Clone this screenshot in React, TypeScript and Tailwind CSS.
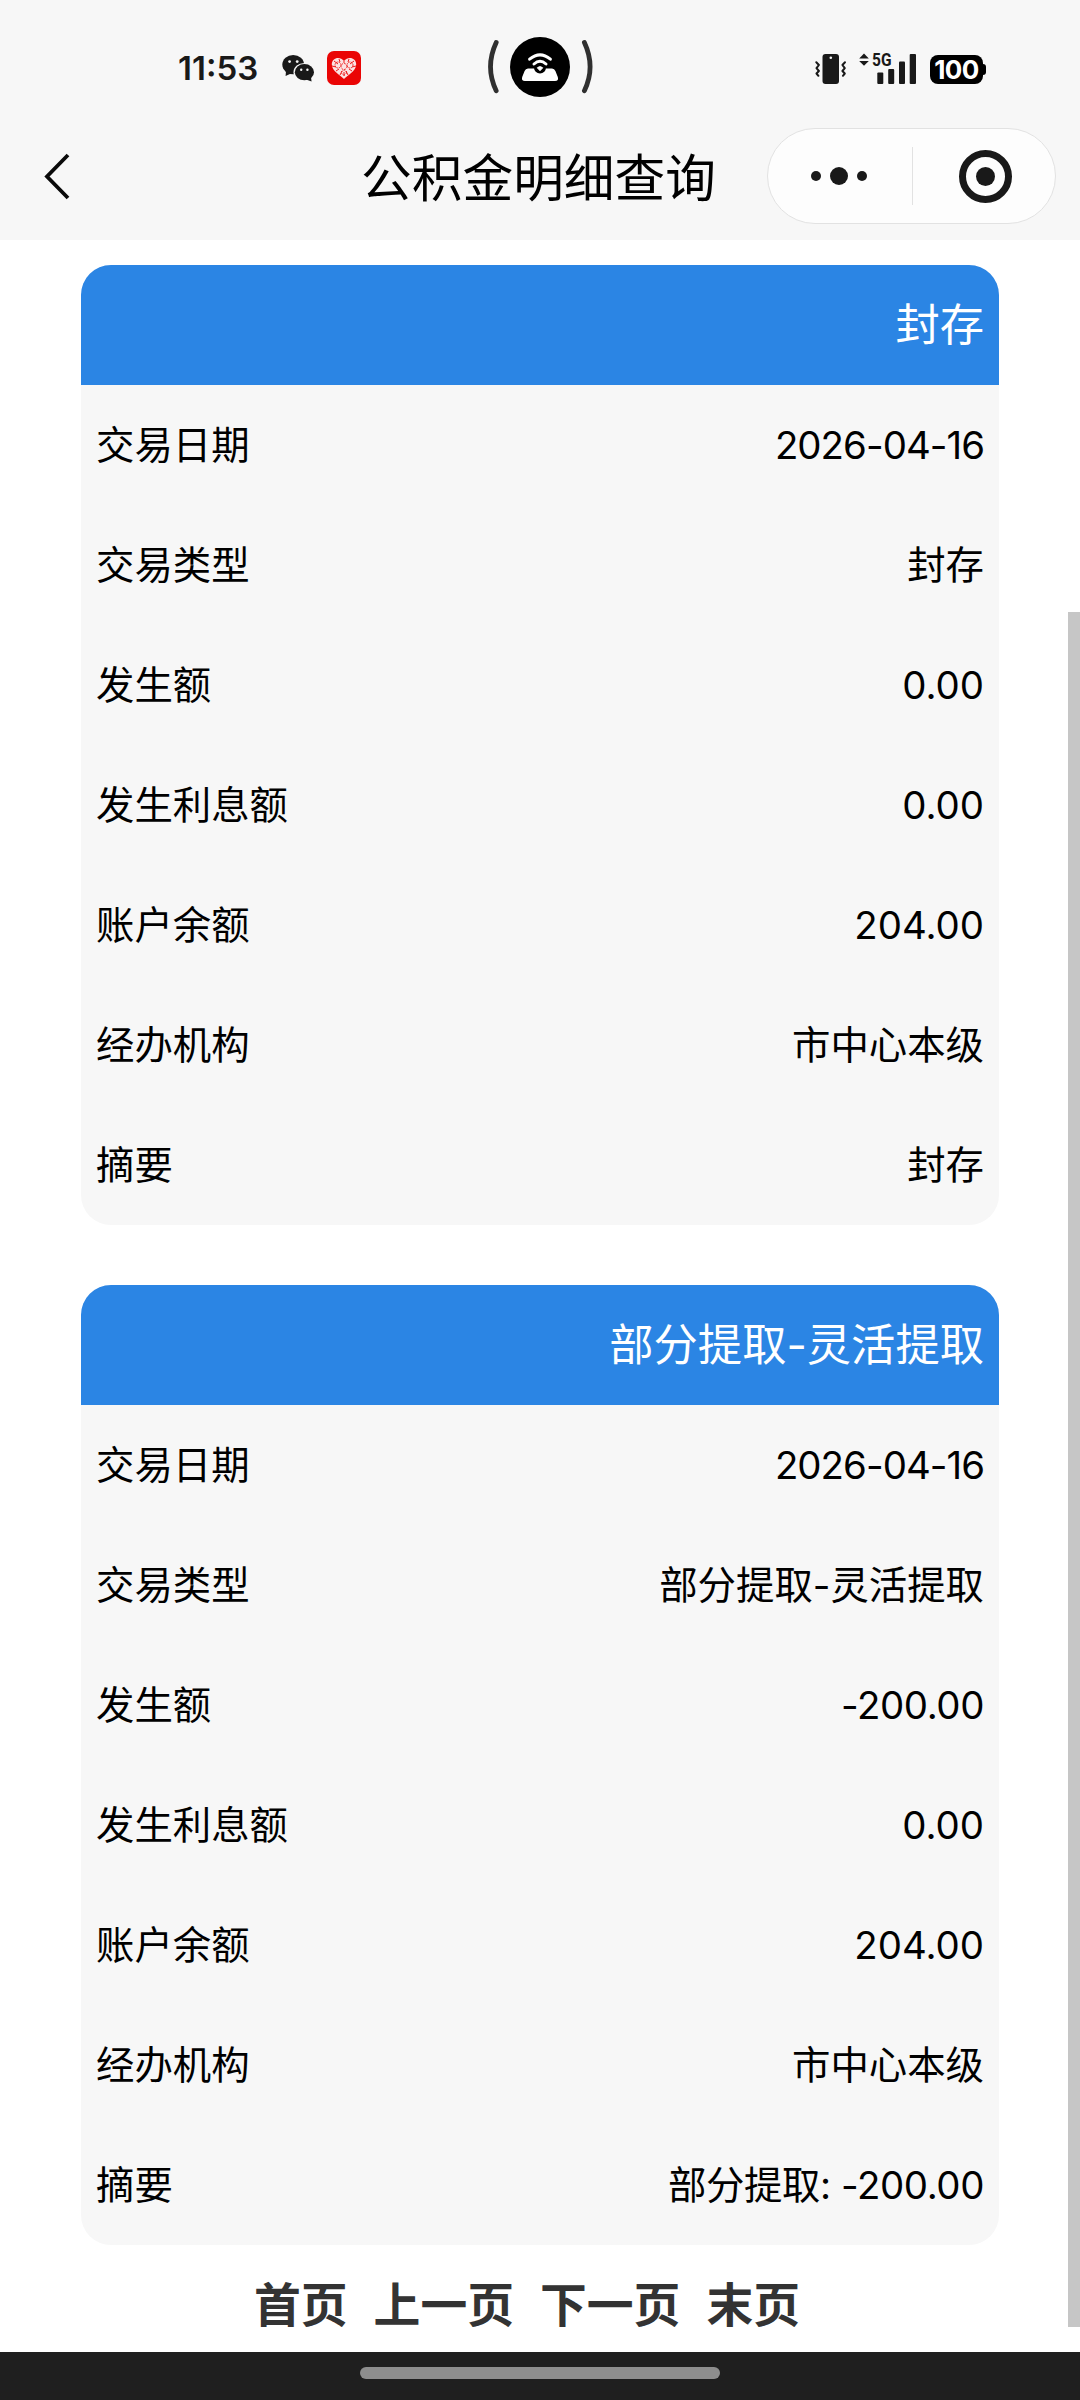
interface Row {
  label: string
  value: string
}

interface RecordCardProps {
  title: string
  rows: Row[]
}

const records: RecordCardProps[] = [
  {
    title: '封存',
    rows: [
      { label: '交易日期', value: '2026-04-16' },
      { label: '交易类型', value: '封存' },
      { label: '发生额', value: '0.00' },
      { label: '发生利息额', value: '0.00' },
      { label: '账户余额', value: '204.00' },
      { label: '经办机构', value: '市中心本级' },
      { label: '摘要', value: '封存' },
    ],
  },
  {
    title: '部分提取-灵活提取',
    rows: [
      { label: '交易日期', value: '2026-04-16' },
      { label: '交易类型', value: '部分提取-灵活提取' },
      { label: '发生额', value: '-200.00' },
      { label: '发生利息额', value: '0.00' },
      { label: '账户余额', value: '204.00' },
      { label: '经办机构', value: '市中心本级' },
      { label: '摘要', value: '部分提取: -200.00' },
    ],
  },
]

const pages = ['首页', '上一页', '下一页', '末页']

// dates and signed amounts are set slightly tighter than the rest
function valueTracking(value: string) {
  if (/^\d{4}-/.test(value)) return 'tracking-[-0.95px]'
  if (value.includes('-200')) return 'tracking-[-0.4px]'
  return ''
}

function WechatIcon() {
  return (
    <svg width="33" height="28" viewBox="0 0 33 28" className="ml-[25px]">
      <path d="M4 17 L3.6 22 L9 19.5 Z" fill="#191919" />
      <ellipse cx="11.2" cy="10.6" rx="10.9" ry="9.7" fill="#191919" />
      <circle cx="7.6" cy="7.6" r="1.4" fill="#f7f7f7" />
      <circle cx="15.2" cy="7.6" r="1.4" fill="#f7f7f7" />
      <ellipse cx="22.4" cy="18.2" rx="10.9" ry="9.3" fill="#f7f7f7" />
      <path d="M24 25.5 L29.6 27.6 L28.8 22 Z" fill="#191919" />
      <ellipse cx="22.4" cy="18.2" rx="9.6" ry="8.1" fill="#191919" />
      <circle cx="19.2" cy="15.8" r="1.2" fill="#f7f7f7" />
      <circle cx="25.4" cy="15.8" r="1.2" fill="#f7f7f7" />
    </svg>
  )
}

function HeartBadge() {
  return (
    <svg width="34" height="34" viewBox="0 0 34 34" className="ml-3">
      <rect width="34" height="34" rx="7" fill="#ea0505" />
      <path
        d="M17 28 C14 24.5 5 20.5 4.8 13.5 C4.8 6.5 13 4.8 17 10 C21 4.8 29.2 6.5 29.2 13.5 C29 20.5 20 24.5 17 28 Z"
        fill="#fbe3e3"
      />
      <g stroke="#ea0505" strokeWidth="0.9" fill="none">
        <path d="M7 10 L11 13 M27 10 L23 13 M5 15 L9 16 M29 15 L25 16 M12 8 L13 11 M22 8 L21 11 M9 20 L12 18 M25 20 L22 18 M17 10 V12 M13 24 L15 20 M21 24 L19 20 M17 21 V25" />
        <circle cx="17" cy="15.5" r="3" strokeDasharray="1.6 1.2" />
        <circle cx="11" cy="14" r="3" strokeDasharray="1.4 1" />
        <circle cx="23" cy="14" r="3" strokeDasharray="1.4 1" />
        <circle cx="17" cy="21.5" r="2.4" strokeDasharray="1.4 1" />
      </g>
    </svg>
  )
}

function CameraIsland() {
  return (
    <svg width="108" height="64" viewBox="0 0 108 64">
      <g stroke="#303030" strokeWidth="4.8" strokeLinecap="round" fill="none">
        <path d="M10.2 9.5 Q-1.2 34 10.2 57.8" />
        <path d="M98.4 9.5 Q109.8 34 98.4 57.8" />
      </g>
      <circle cx="54" cy="34" r="30" fill="#000" />
      <path d="M42 35.5 H66 Q68.4 35.5 69.4 38 L71.8 44 Q73 48 69 48 H39 Q35 48 36.2 44 L38.6 38 Q39.6 35.5 42 35.5 Z" fill="#fff" />
      <circle cx="54" cy="34.6" r="6" fill="#000" />
      <path d="M43.6 26.2 Q54 17.6 64.4 26.2" stroke="#fff" strokeWidth="3" strokeLinecap="round" fill="none" />
      <path d="M48 31 Q54 25.6 60 31" stroke="#fff" strokeWidth="3" strokeLinecap="round" fill="none" />
      <path d="M51.2 34.8 Q54 32.2 56.8 34.8 L54 37.8 Z" fill="#fff" stroke="#fff" strokeWidth="0.8" strokeLinejoin="round" />
    </svg>
  )
}

function VibrateIcon() {
  return (
    <svg width="32" height="32" viewBox="0 0 32 32">
      <rect x="7.5" y="1" width="16.5" height="30" rx="3" fill="#191919" />
      <circle cx="15.8" cy="4.8" r="1.3" fill="#f7f7f7" />
      <g stroke="#191919" strokeWidth="2" fill="none" strokeLinejoin="round" strokeLinecap="round">
        <path d="M1.3 9.3 L3.9 12 L1.5 15.2 L3.9 18 L1.5 20.5 L3.4 22.8" />
        <path d="M30 9.3 L27.4 12 L29.8 15.2 L27.4 18 L29.8 20.5 L27.9 22.8" />
      </g>
    </svg>
  )
}

function SignalIcon() {
  return (
    <svg width="58" height="48" viewBox="0 -8 58 48" className="-my-2 ml-3">
      <g fill="#191919">
        <path d="M5 0.5 L9.8 5.4 H0.2 Z" />
        <path d="M5 12.8 L9.8 7.9 H0.2 Z" />
        <rect x="18.3" y="19.5" width="6" height="11.5" rx="1" />
        <rect x="29.2" y="16" width="6" height="15" rx="1" />
        <rect x="40" y="8.5" width="6" height="22.5" rx="1" />
        <rect x="50.7" y="1" width="6.3" height="30" rx="1" />
        <text
          x="13"
          y="13.2"
          fontSize="17.5"
          fontWeight="700"
          fontFamily="Roboto, sans-serif"
          textLength="19.5"
          lengthAdjust="spacingAndGlyphs"
        >
          5G
        </text>
      </g>
    </svg>
  )
}

function Battery() {
  return (
    <div className="ml-[13px] flex items-center">
      <div className="flex h-[29px] w-[53px] items-center justify-center rounded-[8px] bg-black pt-px text-[26px] leading-none font-bold tracking-[-0.6px] text-white">
        100
      </div>
      <div className="h-[11px] w-[3px] rounded-r-[3px] bg-black" />
    </div>
  )
}

function StatusBar() {
  return (
    <div className="grid h-[112px] grid-cols-[1fr_108px_1fr] items-start">
      <div className="flex items-center pt-[51px] pl-[178px]">
        <span className="w-[79px] text-[33px] leading-[34px] font-semibold whitespace-nowrap text-[#191919]">11:53</span>
        <WechatIcon />
        <HeartBadge />
      </div>
      <div className="pt-[33px]">
        <CameraIsland />
      </div>
      <div className="flex items-center justify-end pt-[53px] pr-[94px]">
        <VibrateIcon />
        <SignalIcon />
        <Battery />
      </div>
    </div>
  )
}

function NavBar() {
  return (
    <div className="grid h-32 grid-cols-[313px_1fr_313px] items-start pt-4">
      <svg width="30" height="50" viewBox="0 0 30 50" className="mt-6 ml-[43px]">
        <path d="M25 3 L4 24.5 L25 46" stroke="#0a0a0a" strokeWidth="3.8" fill="none" />
      </svg>
      <h1 className="-ml-[3px] pt-[3px] text-center text-[50.7px] leading-[96px] whitespace-nowrap text-black">公积金明细查询</h1>
      <div className="flex h-24 w-[289px] items-center rounded-full border border-[#e2e2e2] bg-[#fdfdfd]">
        <div className="flex w-[144px] items-center justify-center gap-[9px] pr-[2px]">
          <span className="h-[10px] w-[10px] rounded-full bg-[#191919]" />
          <span className="h-[18px] w-[18px] rounded-full bg-[#191919]" />
          <span className="h-[10px] w-[10px] rounded-full bg-[#191919]" />
        </div>
        <div className="h-[58px] w-px bg-[#e2e2e2]" />
        <div className="flex flex-1 items-center justify-center pl-[2px]">
          <span className="flex h-[53px] w-[53px] items-center justify-center rounded-full border-[7px] border-[#191919]">
            <span className="h-[19px] w-[19px] rounded-full bg-[#191919]" />
          </span>
        </div>
      </div>
    </div>
  )
}

function RecordCard({ title, rows }: RecordCardProps) {
  return (
    <section className="overflow-hidden rounded-[30px] bg-[#f7f7f7]">
      <h2 className="h-[120px] bg-[#2b85e4] px-[15px] text-right text-[44.3px] leading-[120px] text-white">{title}</h2>
      {rows.map((row) => (
        <div key={row.label} className="flex h-[120px] justify-between px-[15px] text-[38.4px] leading-[120px] text-black">
          <span>{row.label}</span>
          <span className={valueTracking(row.value)}>{row.value}</span>
        </div>
      ))}
    </section>
  )
}

export default function App() {
  return (
    <div className="relative flex h-[2400px] w-[1080px] flex-col overflow-hidden bg-white font-[Inter,'Noto_Sans_CJK_SC',sans-serif]">
      <header className="h-[240px] bg-[#f7f7f7]">
        <StatusBar />
        <NavBar />
      </header>

      <main className="flex-1 px-[81px] pt-[25px]">
        <div className="flex flex-col gap-[60px]">
          {records.map((record) => (
            <RecordCard key={record.title} title={record.title} rows={record.rows} />
          ))}
        </div>
        <nav className="flex gap-[26px] pt-[25px] pl-[173px] text-[46.8px] leading-[70px] font-bold whitespace-nowrap text-[#333]">
          {pages.map((page) => (
            <a key={page}>{page}</a>
          ))}
        </nav>
      </main>

      {/* scroll indicator over the page edge */}
      <div className="absolute top-[612px] right-0 h-[1715px] w-3 bg-[#c6c6c6]" />

      <footer className="flex h-12 justify-center bg-[#1f1f1f] pt-[15px]">
        <div className="h-3 w-[360px] rounded-full bg-[#8e8e8e]" />
      </footer>
    </div>
  )
}
